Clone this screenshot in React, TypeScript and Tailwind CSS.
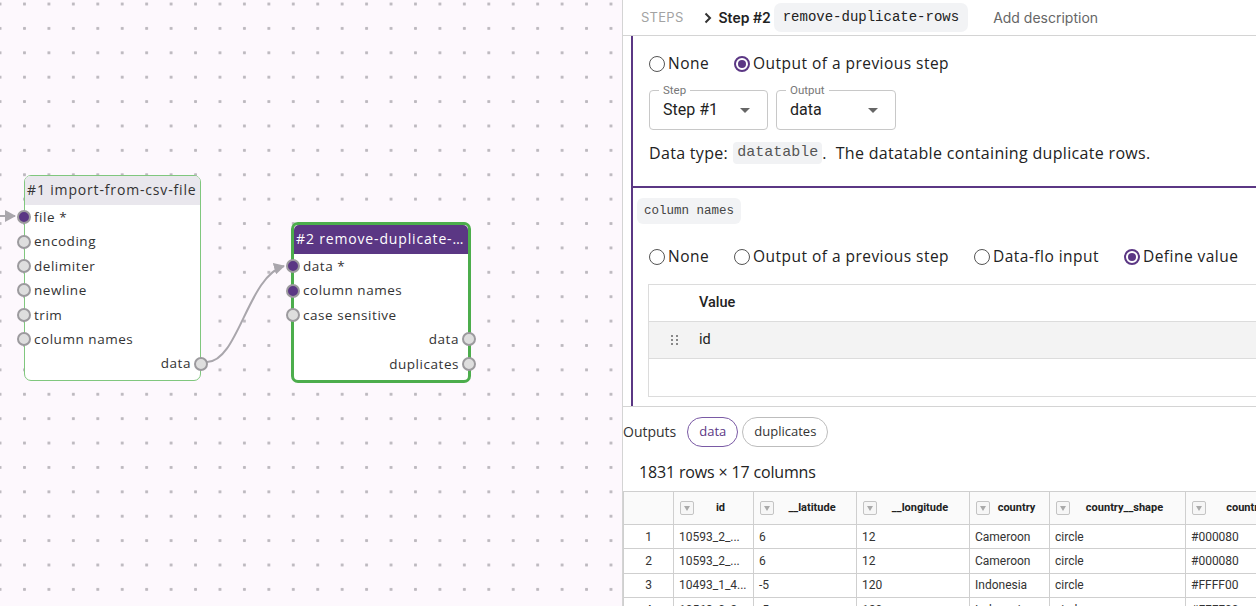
import React from "react";

type Port = { label: string; filled?: boolean; right?: boolean };

function PortDot({ filled, side }: { filled?: boolean; side: "left" | "right" }) {
  return (
    <span
      className={
        "absolute top-1/2 -translate-y-1/2 w-[14px] h-[14px] rounded-full border-2 border-[#9c9a9e] " +
        (filled ? "bg-[#5b3784] " : "bg-[#dedede] ") +
        (side === "left" ? "left-[-8px]" : "right-[-8px]")
      }
    />
  );
}

function Node({
  title,
  left,
  top,
  width,
  height,
  selected,
  ports,
}: {
  title: string;
  left: number;
  top: number;
  width: number;
  height: number;
  selected?: boolean;
  ports: Port[];
}) {
  return (
    <div
      className={
        "absolute flex flex-col rounded-[7px] bg-white font-['Open_Sans',sans-serif] text-[#333] " +
        (selected ? "border-[3px] border-[#4cad4c]" : "border border-[#80c77e]")
      }
      style={{ left, top, width, height }}
    >
      <div
        className={
          "h-[29px] shrink-0 truncate px-[2px] pt-[5px] text-[14px] leading-[18px] tracking-[0.06em] rounded-t-[5px] " +
          (selected ? "bg-[#5b3784] text-white" : "bg-[#e9e7ed] text-[#333]")
        }
      >
        {title}
      </div>
      {ports.map((p, i) => (
        <div
          key={i}
          className={
            "relative flex h-[24.4px] shrink-0 items-center text-[13.5px] tracking-[0.04em] " +
            (p.right ? "justify-end pr-[9px]" : "pl-[9px]")
          }
        >
          {p.label}
          <PortDot filled={p.filled} side={p.right ? "right" : "left"} />
        </div>
      ))}
    </div>
  );
}

function Radio({ label, checked }: { label: string; checked?: boolean }) {
  return (
    <span className="flex items-center gap-[3px]">
      {checked ? (
        <span className="flex h-[16px] w-[16px] items-center justify-center rounded-full border-2 border-[#5b3784]">
          <span className="h-[8px] w-[8px] rounded-full bg-[#5b3784]" />
        </span>
      ) : (
        <span className="h-[16px] w-[16px] rounded-full border border-[#555]" />
      )}
      <span>{label}</span>
    </span>
  );
}

function Caret() {
  return (
    <svg width="10" height="5" viewBox="0 0 10 5">
      <path d="M0 0 L10 0 L5 5 Z" fill="#666" />
    </svg>
  );
}

function SelectBox({ label, value, width }: { label: string; value: string; width: number }) {
  return (
    <div
      className="relative flex h-[40px] items-center justify-between rounded-[4px] border border-[#c8c8c8] pl-[13px] pr-[17px] text-[16px] text-[#222]"
      style={{ width }}
    >
      <span className="absolute left-[9px] top-[-8px] bg-white px-[4px] text-[11.5px] leading-[14px] text-[#777]">
        {label}
      </span>
      <span>{value}</span>
      <Caret />
    </div>
  );
}

function FilterIcon() {
  return (
    <span className="flex h-[14px] w-[14px] shrink-0 items-center justify-center rounded-[2px] border border-[#c4c4c4] bg-[#f6f6f6]">
      <svg width="6" height="5" viewBox="0 0 6 5">
        <path d="M0 0 L6 0 L3 5 Z" fill="#aaa" />
      </svg>
    </span>
  );
}

const columns = [
  { name: "id", w: 80 },
  { name: "__latitude", w: 103 },
  { name: "__longitude", w: 113 },
  { name: "country", w: 80 },
  { name: "country__shape", w: 136 },
  { name: "country__color", w: 140 },
];

const rows = [
  ["10593_2_...", "6", "12", "Cameroon", "circle", "#000080"],
  ["10593_2_...", "6", "12", "Cameroon", "circle", "#000080"],
  ["10493_1_4...", "-5", "120", "Indonesia", "circle", "#FFFF00"],
  ["10563_0_2...", "-5", "120", "Indonesia", "circle", "#FFFF00"],
];

function Canvas() {
  return (
    <div className="relative h-full w-[622px] shrink-0 overflow-hidden bg-[#fdf8fd] bg-[radial-gradient(circle,#bdb9bf_1.3px,transparent_1.8px)] bg-[size:24.45px_24.4px] bg-[position:-12.2px_-8.2px]">
      <svg className="absolute left-0 top-0" width="622" height="606">
        <defs>
          <marker id="arr" markerWidth="12" markerHeight="12" refX="10" refY="6" orient="auto" markerUnits="userSpaceOnUse">
            <path d="M0 0 L11 6 L0 12 Z" fill="#a9a6ac" />
          </marker>
        </defs>
        <path d="M0 216 L15 216" stroke="#a9a6ac" strokeWidth="2" fill="none" markerEnd="url(#arr)" />
        <path
          d="M207 362 C 238 362 248 276 284 266"
          stroke="#a9a6ac"
          strokeWidth="2"
          fill="none"
          markerEnd="url(#arr)"
        />
      </svg>
      <Node
        title="#1 import-from-csv-file"
        left={24}
        top={175}
        width={177}
        height={206}
        ports={[
          { label: "file *", filled: true },
          { label: "encoding" },
          { label: "delimiter" },
          { label: "newline" },
          { label: "trim" },
          { label: "column names" },
          { label: "data", right: true },
        ]}
      />
      <Node
        title="#2 remove-duplicate-rows"
        left={291}
        top={222}
        width={180}
        height={161}
        selected
        ports={[
          { label: "data *", filled: true },
          { label: "column names", filled: true },
          { label: "case sensitive" },
          { label: "data", right: true },
          { label: "duplicates", right: true },
        ]}
      />
    </div>
  );
}

function Panel() {
  return (
    <div className="flex h-full min-w-0 flex-1 flex-col overflow-hidden border-l border-[#d4d4d4] bg-white">
      {/* header */}
      <div className="flex h-[36px] shrink-0 items-center border-b border-[#d4d4d4] pl-[18px] font-['Inter',sans-serif]">
        <span className="text-[13px] tracking-[0.02em] text-[#a3a3a3]">STEPS</span>
        <svg className="ml-[20px]" width="8" height="12" viewBox="0 0 8 12">
          <path d="M1.5 1.5 L6 6 L1.5 10.5" stroke="#333" strokeWidth="2" fill="none" />
        </svg>
        <span className="ml-[7px] text-[14px] font-semibold text-[#222]">Step #2</span>
        <span className="ml-[3px] rounded-[7px] bg-[#f2f3f5] px-[9px] py-[4px] font-['Liberation_Mono',monospace] text-[14px] font-medium text-[#222]">
          remove-duplicate-rows
        </span>
        <span className="ml-[25px] text-[14px] text-[#666]">Add description</span>
      </div>

      {/* inputs */}
      <div className="h-[371px] shrink-0 overflow-hidden border-b border-[#d4d4d4] pl-[8px]">
        <div className="h-full border-l-2 border-[#5b3784]">
          <div className="h-[152px] border-b-2 border-[#5b3784] pl-[16px] pt-[17px]">
            <div className="flex h-[22px] items-center gap-[25px] font-['Open_Sans',sans-serif] text-[15.5px] tracking-[0.03em] text-[#222]">
              <Radio label="None" />
              <Radio label="Output of a previous step" checked />
            </div>
            <div className="mt-[15px] flex gap-[8px] font-['Roboto',sans-serif]">
              <SelectBox label="Step" value="Step #1" width={119} />
              <SelectBox label="Output" value="data" width={120} />
            </div>
            <div className="mt-[11px] flex items-center font-['Open_Sans',sans-serif] text-[16px] tracking-[0.02em] text-[#222]">
              Data type:
              <code className="ml-[5px] rounded-[4px] bg-[#f1f2f4] px-[4px] font-['Liberation_Mono',monospace] text-[15px] tracking-normal text-[#555]">
                datatable
              </code>
              .&nbsp;&nbsp;The datatable containing duplicate rows.
            </div>
          </div>

          <div className="pt-[8px]">
            <span className="ml-[4px] inline-block rounded-[6px] bg-[#f2f3f5] px-[7px] py-[4px] font-['Liberation_Mono',monospace] text-[12.5px] leading-[18px] text-[#444]">
              column names
            </span>
            <div className="mt-[22px] flex h-[22px] items-center gap-[25px] pl-[16px] font-['Open_Sans',sans-serif] text-[15.5px] tracking-[0.03em] text-[#222]">
              <Radio label="None" />
              <Radio label="Output of a previous step" />
              <Radio label="Data-flo input" />
              <Radio label="Define value" checked />
            </div>
            <div className="ml-[15px] mt-[16px] w-[700px] border border-[#dcdcdc] font-['Roboto',sans-serif] text-[14.5px] text-[#222]">
              <div className="flex h-[37px] items-center border-b border-[#dcdcdc] pl-[50px] font-medium">Value</div>
              <div className="flex h-[37px] items-center border-b border-[#dcdcdc] bg-[#f3f3f3]">
                <span className="flex w-[50px] justify-center pl-[1px]">
                  <svg width="7" height="10" viewBox="0 0 7 10">
                    {[0, 4, 8].map((y) => (
                      <React.Fragment key={y}>
                        <rect x="0" y={y} width="2" height="2" fill="#888" />
                        <rect x="5" y={y} width="2" height="2" fill="#888" />
                      </React.Fragment>
                    ))}
                  </svg>
                </span>
                <span>id</span>
              </div>
              <div className="h-[37px]" />
            </div>
          </div>
        </div>
      </div>

      {/* outputs */}
      <div className="flex h-[47px] shrink-0 items-center gap-[4px] pt-[2px] font-['Open_Sans',sans-serif] text-[13px]">
        <span className="mr-[7px] text-[14px] text-[#333]">Outputs</span>
        <span className="flex h-[30px] items-center rounded-full border border-[#7a5aa5] px-[11px] text-[#5b3784]">data</span>
        <span className="flex h-[30px] items-center rounded-full border border-[#bdbdbd] px-[11px] text-[#333]">duplicates</span>
      </div>
      <div className="flex h-[37px] shrink-0 items-center pl-[16px] pb-[2px] font-['Open_Sans',sans-serif] text-[16px] tracking-[-0.01em] text-[#222]">
        1831 rows × 17 columns
      </div>
      <div className="w-[800px] border-t border-l border-[#cfcfcf] font-['Roboto',sans-serif] text-[12px] text-[#333]">
        <div className="flex h-[33px] border-b border-[#cfcfcf] bg-[#fafafa]">
          <div className="w-[50px] shrink-0 border-r border-[#cfcfcf]" />
          {columns.map((c) => (
            <div
              key={c.name}
              className="flex shrink-0 items-center border-r border-[#cfcfcf] pl-[6px] pr-[6px] text-[11px] font-bold text-[#222]"
              style={{ width: c.w }}
            >
              <FilterIcon />
              <span className="flex-1 truncate text-center">{c.name}</span>
            </div>
          ))}
        </div>
        {rows.map((r, i) => (
          <div key={i} className="flex h-[24.3px] border-b border-[#cfcfcf]">
            <div className="flex w-[50px] shrink-0 items-center justify-center border-r border-[#cfcfcf]">{i + 1}</div>
            {r.map((v, j) => (
              <div
                key={j}
                className="flex shrink-0 items-center truncate border-r border-[#cfcfcf] pl-[5px]"
                style={{ width: columns[j].w }}
              >
                {v}
              </div>
            ))}
          </div>
        ))}
      </div>
    </div>
  );
}

export default function App() {
  return (
    <div className="flex h-[606px] w-[1256px] overflow-hidden">
      <Canvas />
      <Panel />
    </div>
  );
}
